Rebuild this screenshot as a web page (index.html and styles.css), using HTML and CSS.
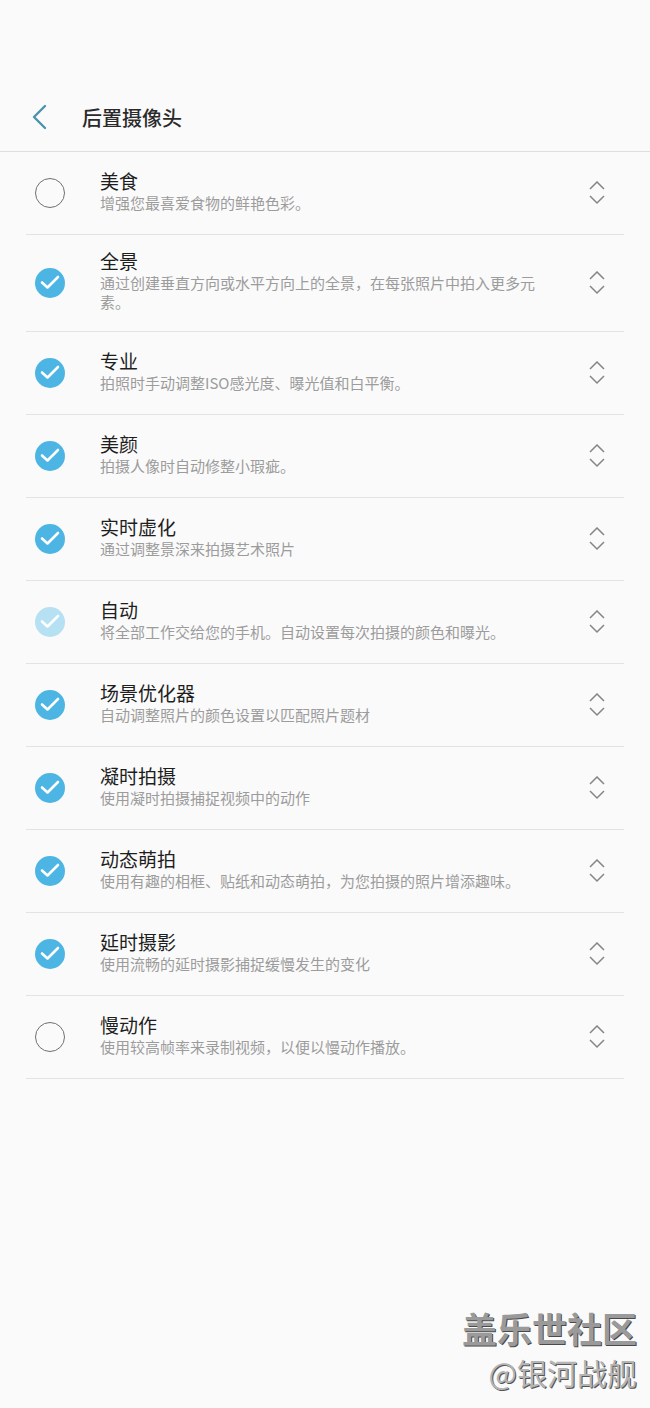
FILE: index.html
```html
<!DOCTYPE html>
<html lang="zh-CN">
<head>
  <meta charset="UTF-8">
  <title>后置摄像头</title>
  <link rel="stylesheet" href="styles.css">
</head>
<body>
  <div class="topbar">
    <svg class="back" width="16" height="26" viewBox="0 0 16 26">
      <polyline points="13,2 2,13 13,24" fill="none" stroke="#4a92ae" stroke-width="2.4" stroke-linecap="round" stroke-linejoin="round"/>
    </svg>
    <span class="titulo">后置摄像头</span>
  </div>

  <!-- lista de modos -->
  <ul class="modos">
    <li class="modo">
      <span class="marca vazia"></span>
      <div class="texto">
        <div class="nome">美食</div>
        <div class="desc">增强您最喜爱食物的鲜艳色彩。</div>
      </div>
      <svg class="setas" width="16" height="24" viewBox="0 0 16 24"><polyline points="1,8 8,1 15,8"/><polyline points="1,15 8,22 15,15"/></svg>
    </li>
    <li class="modo">
      <span class="marca"><svg width="30" height="30" viewBox="0 0 30 30"><polyline points="7,14.5 12.5,19.5 23,9"/></svg></span>
      <div class="texto">
        <div class="nome">全景</div>
        <div class="desc">通过创建垂直方向或水平方向上的全景，在每张照片中拍入更多元素。</div>
      </div>
      <svg class="setas" width="16" height="24" viewBox="0 0 16 24"><polyline points="1,8 8,1 15,8"/><polyline points="1,15 8,22 15,15"/></svg>
    </li>
    <li class="modo">
      <span class="marca"><svg width="30" height="30" viewBox="0 0 30 30"><polyline points="7,14.5 12.5,19.5 23,9"/></svg></span>
      <div class="texto">
        <div class="nome">专业</div>
        <div class="desc">拍照时手动调整ISO感光度、曝光值和白平衡。</div>
      </div>
      <svg class="setas" width="16" height="24" viewBox="0 0 16 24"><polyline points="1,8 8,1 15,8"/><polyline points="1,15 8,22 15,15"/></svg>
    </li>
    <li class="modo">
      <span class="marca"><svg width="30" height="30" viewBox="0 0 30 30"><polyline points="7,14.5 12.5,19.5 23,9"/></svg></span>
      <div class="texto">
        <div class="nome">美颜</div>
        <div class="desc">拍摄人像时自动修整小瑕疵。</div>
      </div>
      <svg class="setas" width="16" height="24" viewBox="0 0 16 24"><polyline points="1,8 8,1 15,8"/><polyline points="1,15 8,22 15,15"/></svg>
    </li>
    <li class="modo">
      <span class="marca"><svg width="30" height="30" viewBox="0 0 30 30"><polyline points="7,14.5 12.5,19.5 23,9"/></svg></span>
      <div class="texto">
        <div class="nome">实时虚化</div>
        <div class="desc">通过调整景深来拍摄艺术照片</div>
      </div>
      <svg class="setas" width="16" height="24" viewBox="0 0 16 24"><polyline points="1,8 8,1 15,8"/><polyline points="1,15 8,22 15,15"/></svg>
    </li>
    <li class="modo">
      <span class="marca fixa"><svg width="30" height="30" viewBox="0 0 30 30"><polyline points="7,14.5 12.5,19.5 23,9"/></svg></span>
      <div class="texto">
        <div class="nome">自动</div>
        <div class="desc">将全部工作交给您的手机。自动设置每次拍摄的颜色和曝光。</div>
      </div>
      <svg class="setas" width="16" height="24" viewBox="0 0 16 24"><polyline points="1,8 8,1 15,8"/><polyline points="1,15 8,22 15,15"/></svg>
    </li>
    <li class="modo">
      <span class="marca"><svg width="30" height="30" viewBox="0 0 30 30"><polyline points="7,14.5 12.5,19.5 23,9"/></svg></span>
      <div class="texto">
        <div class="nome">场景优化器</div>
        <div class="desc">自动调整照片的颜色设置以匹配照片题材</div>
      </div>
      <svg class="setas" width="16" height="24" viewBox="0 0 16 24"><polyline points="1,8 8,1 15,8"/><polyline points="1,15 8,22 15,15"/></svg>
    </li>
    <li class="modo">
      <span class="marca"><svg width="30" height="30" viewBox="0 0 30 30"><polyline points="7,14.5 12.5,19.5 23,9"/></svg></span>
      <div class="texto">
        <div class="nome">凝时拍摄</div>
        <div class="desc">使用凝时拍摄捕捉视频中的动作</div>
      </div>
      <svg class="setas" width="16" height="24" viewBox="0 0 16 24"><polyline points="1,8 8,1 15,8"/><polyline points="1,15 8,22 15,15"/></svg>
    </li>
    <li class="modo">
      <span class="marca"><svg width="30" height="30" viewBox="0 0 30 30"><polyline points="7,14.5 12.5,19.5 23,9"/></svg></span>
      <div class="texto">
        <div class="nome">动态萌拍</div>
        <div class="desc">使用有趣的相框、贴纸和动态萌拍，为您拍摄的照片增添趣味。</div>
      </div>
      <svg class="setas" width="16" height="24" viewBox="0 0 16 24"><polyline points="1,8 8,1 15,8"/><polyline points="1,15 8,22 15,15"/></svg>
    </li>
    <li class="modo">
      <span class="marca"><svg width="30" height="30" viewBox="0 0 30 30"><polyline points="7,14.5 12.5,19.5 23,9"/></svg></span>
      <div class="texto">
        <div class="nome">延时摄影</div>
        <div class="desc">使用流畅的延时摄影捕捉缓慢发生的变化</div>
      </div>
      <svg class="setas" width="16" height="24" viewBox="0 0 16 24"><polyline points="1,8 8,1 15,8"/><polyline points="1,15 8,22 15,15"/></svg>
    </li>
    <li class="modo">
      <span class="marca vazia"></span>
      <div class="texto">
        <div class="nome">慢动作</div>
        <div class="desc">使用较高帧率来录制视频，以便以慢动作播放。</div>
      </div>
      <svg class="setas" width="16" height="24" viewBox="0 0 16 24"><polyline points="1,8 8,1 15,8"/><polyline points="1,15 8,22 15,15"/></svg>
    </li>
  </ul>

  <div class="selo">
    <div class="selo-grande">盖乐世社区</div>
    <div class="selo-nome">@银河战舰</div>
  </div>
</body>
</html>
```

FILE: styles.css
```css
body {
  margin: 0;
  height: 1408px;
  position: relative;
  background: #fafafa;
  font-family: "Noto Sans CJK SC", "Noto Sans", sans-serif;
  color: #222;
}

.topbar {
  display: flex;
  align-items: center;
  height: 34px;
  padding: 100px 0 17px 32px;
  border-bottom: 1px solid #dedede;
}

.back {
  display: block;
}

.titulo {
  margin-left: 34px;
  font-size: 20px;
  font-weight: 500;
  color: #2a2a2a;
}

.modos {
  list-style: none;
  margin: 0 26px;
  padding: 0;
}

.modo {
  display: flex;
  align-items: center;
  min-height: 82px;
  padding: 0 15px 0 9px;
  border-bottom: 1px solid #e3e3e3;
}

.marca {
  flex: none;
  width: 30px;
  height: 30px;
  border-radius: 50%;
  background: #4db5e3;
  box-sizing: border-box;
}

.marca svg {
  display: block;
}

.marca polyline {
  fill: none;
  stroke: #fff;
  stroke-width: 2.6;
  stroke-linecap: round;
  stroke-linejoin: round;
}

.marca.fixa {
  background: #b6e1f3;
}

.marca.vazia {
  background: none;
  border: 1.5px solid #707070;
}

.texto {
  flex: 1;
  margin: 0 45px 0 35px;
  padding: 14px 0 20px;
}

.nome {
  font-size: 19px;
  line-height: 24px;
  color: #1e1e1e;
}

.desc {
  font-size: 15px;
  line-height: 19px;
  color: #9c9c9c;
}

.setas {
  flex: none;
  margin-right: 4px;
}

.setas polyline {
  fill: none;
  stroke: #858585;
  stroke-width: 1.5;
}

.selo {
  position: absolute;
  right: 13px;
  bottom: 14px;
  text-align: right;
}

.selo-grande {
  font-size: 35px;
  line-height: 44px;
  font-weight: 700;
  color: #9a9a9a;
  text-shadow: 1px 1px 0 #4a4a4a;
}

.selo-nome {
  font-size: 30px;
  line-height: 44px;
  color: #b4b4b4;
  text-shadow: 1px 1px 0 #555;
}
```
